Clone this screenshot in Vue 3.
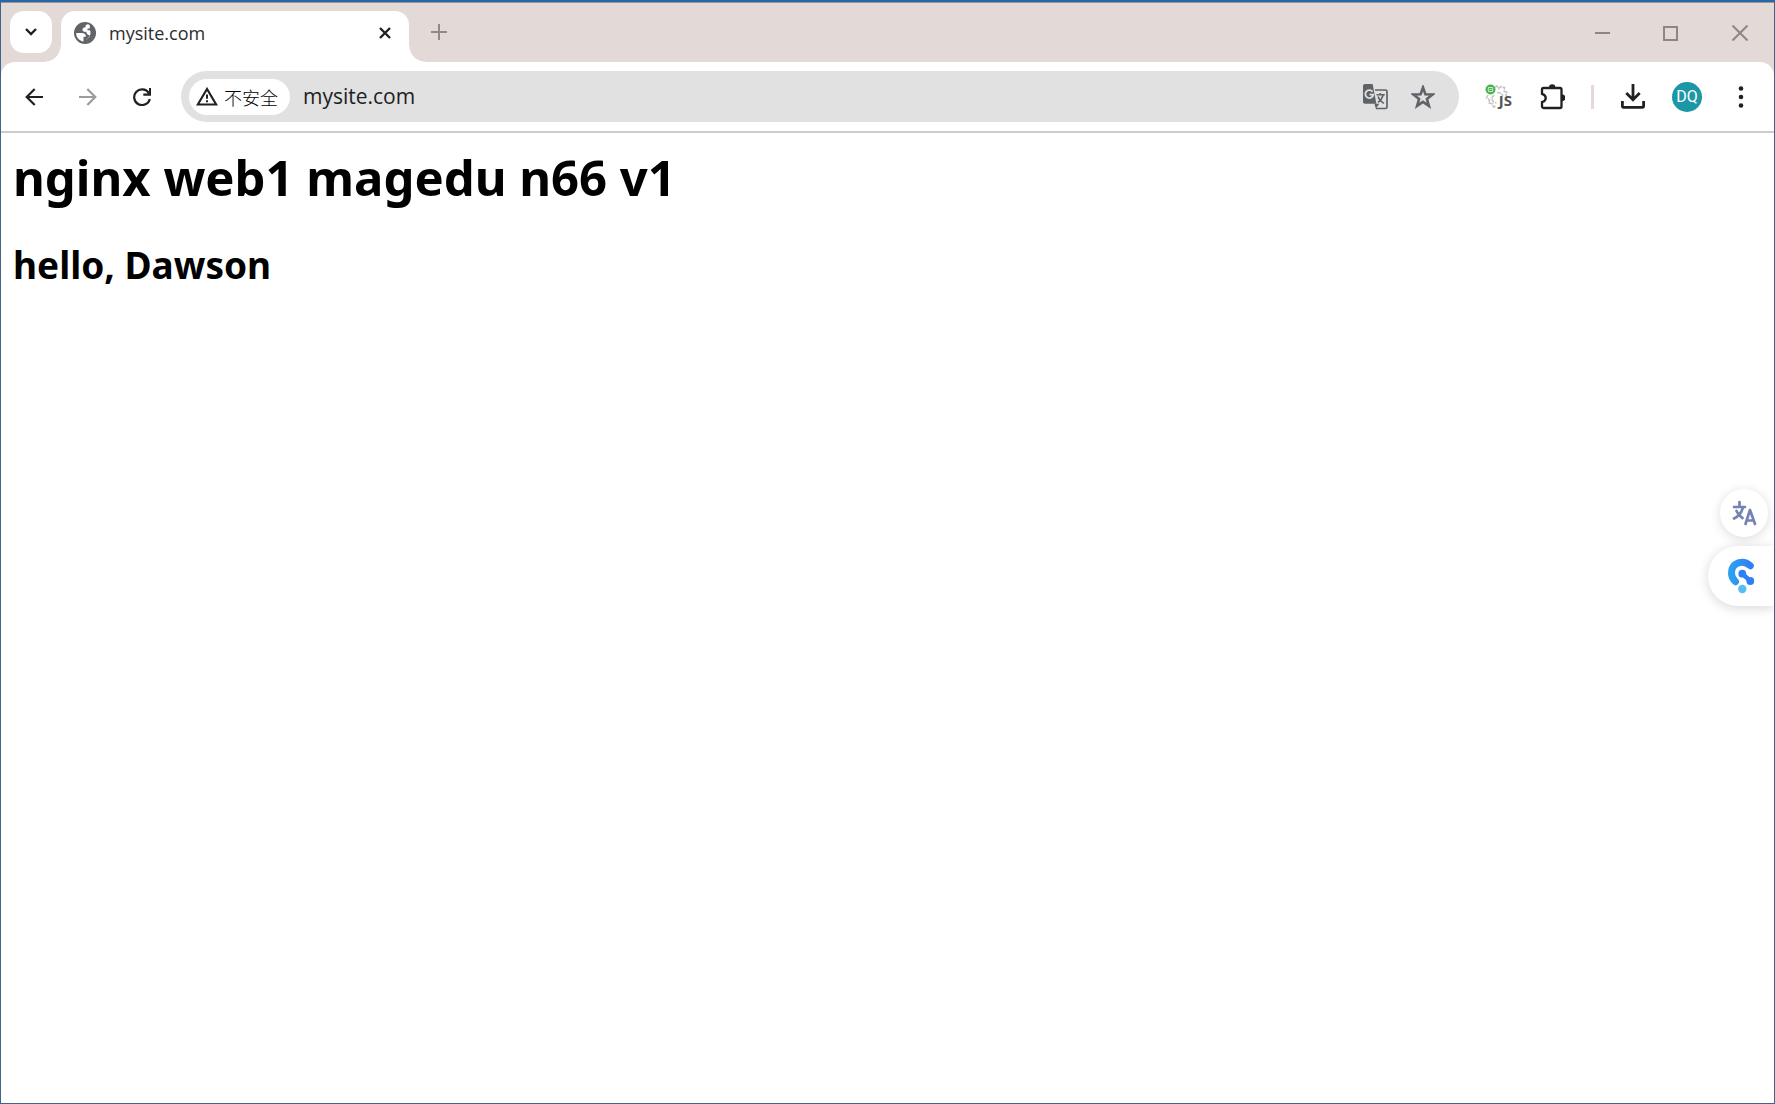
<script setup>
import { ref } from 'vue'

const address = ref('mysite.com')
</script>

<template>
  <div class="window">
    <header class="tabstrip">
      <button class="tab-search" aria-label="搜索标签页">
        <svg width="14" height="10" viewBox="0 0 14 10"><path d="M2 2l5 5 5-5" fill="none" stroke="#202124" stroke-width="2.4" /></svg>
      </button>
      <div class="tab">
        <svg class="favicon" width="22" height="22" viewBox="0 0 22 22">
          <circle cx="11" cy="11" r="11" fill="#5f6368" />
          <path d="M2.200 11h5.300c3 0 4.500 1.300 4.500 3.800H9.500v4.700C5.500 19 2.100 15.500 2.200 11z" fill="#fff" />
          <path d="M13.500 2.300c-1.700.5-2.200 1.500-2 2.900-2.200.2-3 1-3 2.500s.9 2 3 2c.6 0 1 .3 1.100 1 .3 1.700 1.300 2.300 3 2.300-.3 2-1.500 3.500-3.600 4.500v2.300c5-.5 8-4.300 7.800-8.800h-2.300c-.7 0-1-.5-1-1.200 0-1-.5-1.500-1.500-1.500h-1.500V6.500h2.300V3.200c-.7-.5-1.500-.8-2.300-.9z" fill="#fff" />
          <path d="M16.500 9.500c.4 4-1.500 7-4.500 8v2.700c5-.6 8.500-4.500 8.300-9.200h-2.500z" fill="#5f6368" />
        </svg>
        <span class="tab-title">mysite.com</span>
        <button class="tab-close" aria-label="关闭">
          <svg width="14" height="14" viewBox="0 0 14 14"><path d="M2 2l10 10M12 2L2 12" stroke="#202124" stroke-width="2.400" /></svg>
        </button>
      </div>
      <button class="new-tab" aria-label="新标签页">
        <svg width="16" height="16" viewBox="0 0 16 16"><path d="M8 0v16M0 8h16" stroke="#8f8a88" stroke-width="2" /></svg>
      </button>
      <div class="controls">
        <button aria-label="最小化"><svg width="16" height="16" viewBox="0 0 16 16"><path d="M1 8h15" stroke="#8c8684" stroke-width="2" /></svg></button>
        <button aria-label="最大化"><svg width="15" height="15" viewBox="0 0 15 15"><path d="M1 1h13v13H1z" fill="none" stroke="#8c8684" stroke-width="2" /></svg></button>
        <button aria-label="关闭窗口"><svg width="16" height="16" viewBox="0 0 16 16"><path d="M.5.5l15 15M15.500.5l-15 15" stroke="#8c8684" stroke-width="2" /></svg></button>
      </div>
    </header>

    <div class="toolbar-back">
      <nav class="toolbar">
        <button class="tool" aria-label="后退">
          <svg width="18" height="18" viewBox="0 0 18 18"><path d="M18 9H2M9.700 1L1.700 9l8 8" fill="none" stroke="#202124" stroke-width="2.200" /></svg>
        </button>
        <button class="tool" aria-label="前进">
          <svg width="18" height="18" viewBox="0 0 18 18"><path d="M0 9h16M8.300 1l8 8-8 8" fill="none" stroke="#9c9c9c" stroke-width="2.200" /></svg>
        </button>
        <button class="tool" aria-label="重新加载">
          <svg width="18" height="18" viewBox="0 0 18 18"><path d="M15.600 4.700A7.900 7.900 0 1 0 16.800 11" fill="none" stroke="#202124" stroke-width="2.200" /><path d="M18 0v7.700h-7.700V5.600h3.900l1.800-1.900V0z" fill="#202124" /></svg>
        </button>
        <div class="omnibox">
          <button class="chip">
            <svg width="22" height="19" viewBox="0 0 22 19"><path d="M11 2L1.800 17.500h18.400z" fill="none" stroke="#202124" stroke-width="2.200" /><path d="M11 7.500v4.300M11 13.300v2" stroke="#202124" stroke-width="2" /></svg>
            <span>不安全</span>
          </button>
          <input v-model="address" class="address" type="text" aria-label="地址" />
          <button class="omni-button" aria-label="翻译此页">
            <svg width="25" height="26" viewBox="0 0 25 26">
              <path d="M12 6h10.500c.8 0 1.500.6 1.500 1.500v15.500c0 .9-.7 1.500-1.500 1.500H13" fill="none" stroke="#5f6368" stroke-width="1.700" />
              <path d="M2 0h7.600l3.800 19.800H2c-1.200 0-2-.8-2-2V2C0 .8.800 0 2 0z" fill="#5f6368" />
              <path d="M11.500 19.800h4.800l-3.500 5z" fill="#5f6368" />
              <path d="M9.600 7.800A4 4 0 1 0 10.300 10.600H6.500" fill="none" stroke="#e1e1e1" stroke-width="1.800" />
              <path d="M13.500 10.700h8.300M17.300 9v1.700M20.200 10.700c-.8 3.300-2.600 5.800-5.200 7.700M15 12.500c1 2.800 3 5 6 7" fill="none" stroke="#5f6368" stroke-width="1.500" />
            </svg>
          </button>
          <button class="omni-button" aria-label="为此页添加书签">
            <svg width="24" height="24" viewBox="0 0 24 24"><path d="M12 2.500l2.400 6.700 7.200.3-5.700 4.400 2 7-5.900-4-5.900 4 2-7-5.700-4.400 7.200-.3z" fill="none" stroke="#5f6368" stroke-width="2.600" /></svg>
          </button>
        </div>
        <button class="tool ext" aria-label="JS 扩展">
          <svg width="26" height="26" viewBox="0 0 26 26">
            <path d="M10 3l2-1 1.500 2.500 3-2 3 1-.5 3.500 3 1.500-1 3 1.500 2M3 11l-1.500 3 3 2-.5 3 3.500 1 1 3 3-1M9 11l-2.500 3 2 4 3 1M12 8.500l4 .5 2 3" fill="none" stroke="#c4c4c4" stroke-width="1.600" stroke-dasharray="4 1" />
            <circle cx="5.500" cy="5.500" r="5" fill="#49b04f" />
            <path d="M3.300 3.500h4.400v4H3.300zM4.500 5.500h2" fill="none" stroke="#c9efca" stroke-width="1" />
          </svg>
          <span class="ext-label">JS</span>
        </button>
        <button class="tool" aria-label="扩展程序">
          <svg width="26" height="26" viewBox="0 0 26 26"><path d="M4.500 4h16.500c.8 0 1.500.6 1.500 1.500v17c0 .8-.7 1.500-1.500 1.500h-16.500c-.8 0-1.500-.7-1.500-1.500v-4.300c5-1.500 5-6.900 0-8.400V5.500C3 4.600 3.700 4 4.500 4z" fill="none" stroke="#202124" stroke-width="2.300" /><path d="M10 3.500a3.200 3.200 0 0 1 6.400 0zM23 10.500a3.400 3.400 0 0 1 0 6.800z" fill="#202124" /></svg>
        </button>
        <span class="divider"></span>
        <button class="tool" aria-label="下载内容">
          <svg width="24" height="25" viewBox="0 0 24 25"><path d="M12 0v15M5.300 9l6.700 6.700L18.700 9" fill="none" stroke="#202124" stroke-width="2.800" /><path d="M1.400 17v5c0 .8.500 1.300 1.300 1.300h18.600c.8 0 1.300-.5 1.300-1.300v-5" fill="none" stroke="#202124" stroke-width="2.800" /></svg>
        </button>
        <button class="tool" aria-label="个人资料"><span class="avatar">DQ</span></button>
        <button class="tool" aria-label="菜单">
          <svg width="6" height="22" viewBox="0 0 6 22" fill="#202124"><circle cx="3" cy="2.500" r="2.300" /><circle cx="3" cy="11" r="2.300" /><circle cx="3" cy="19.500" r="2.300" /></svg>
        </button>
      </nav>
    </div>

    <main class="page">
      <h1>nginx web1 magedu n66 v1</h1>
      <h2>hello, Dawson</h2>
    </main>

    <aside class="floating">
      <button class="translate" aria-label="翻译">
        <svg width="26" height="26" viewBox="0 0 26 26" fill="none" stroke="#7482b4" stroke-width="2.700" stroke-linecap="round" stroke-linejoin="round"><path d="M3 7h11M8.500 2v5M12 7c-1 5-4 9-9 11.500M5.500 11c1.300 3 3.500 5.500 6 7" /><path d="M14.500 24l4.500-14 5 14M16 20.500h6.500" /></svg>
      </button>
      <button class="assistant" aria-label="助手">
        <svg width="28" height="36" viewBox="0 0 28 36">
          <defs><linearGradient id="arc" x1="0" y1="0" x2="1" y2="0"><stop offset="0" stop-color="#2c9ff0" /><stop offset="1" stop-color="#2f80f8" /></linearGradient></defs>
          <path d="M23.300 7.800C16.500 1.500 4.500 4 4.500 15c0 4 1.500 6.500 4 8.700" fill="none" stroke="url(#arc)" stroke-width="7" stroke-linecap="round" />
          <path d="M15.300 15.700l8 7.300" stroke="#2f80f8" stroke-width="4.500" />
          <circle cx="15.300" cy="15.700" r="3.900" fill="#2f80f8" /><circle cx="23.300" cy="23" r="3.900" fill="#2f80f8" />
          <circle cx="15.300" cy="31" r="4.200" fill="#55bff3" />
        </svg>
      </button>
    </aside>
  </div>
</template>

<style>
body {
  margin: 0;
}
</style>

<style scoped>
.window {
  box-sizing: border-box;
  position: relative;
  display: flex;
  flex-direction: column;
  min-height: 100vh;
  border: 1px solid #41648a;
  border-top: 2px solid #2766a8;
  background: #fff;
  font-family: "Noto Sans", "Noto Sans CJK SC", sans-serif;
}
button {
  display: flex;
  align-items: center;
  justify-content: center;
  flex: none;
  padding: 0;
  border: 0;
  background: none;
  color: inherit;
  font: inherit;
}
svg {
  display: block;
  flex: none;
}
.tabstrip {
  display: flex;
  height: 59px;
  padding-left: 9px;
  border-top: 1px solid #9d9591;
  background: #e3dad7;
}
.tab-search {
  width: 42px;
  height: 42px;
  margin-top: 8px;
  border-radius: 14px;
  background: #fff;
}
.tab {
  position: relative;
  box-sizing: border-box;
  display: flex;
  align-items: center;
  width: 348px;
  height: 51px;
  margin: 8px 0 0 9px;
  padding: 0 17px 8px 13px;
  border-radius: 14px 14px 0 0;
  background: #fff;
}
.tab::before,
.tab::after {
  content: "";
  position: absolute;
  bottom: 0;
  width: 16px;
  height: 16px;
}
.tab::before {
  right: 100%;
  background: radial-gradient(circle at 0 0, transparent 15px, #fff 16px);
}
.tab::after {
  left: 100%;
  background: radial-gradient(circle at 100% 0, transparent 15px, #fff 16px);
}
.tab-title {
  flex: 1;
  margin-left: 13px;
  color: #2c2d30;
  font-family: "Open Sans", sans-serif;
  font-size: 18px;
  line-height: 24px;
}
.new-tab {
  width: 36px;
  height: 36px;
  margin: 11px 0 0 12px;
}
.controls {
  display: flex;
  height: 60px;
  margin-left: auto;
}
.controls button {
  width: 69px;
}
.toolbar-back {
  background: #e3dad7;
}
.toolbar {
  display: flex;
  align-items: center;
  height: 69px;
  padding: 0 6px;
  border-radius: 14px 14px 0 0;
  background: #fff;
}
.tool {
  position: relative;
  width: 54px;
  height: 54px;
}
.omnibox {
  display: flex;
  flex: 1;
  align-items: center;
  height: 51px;
  margin: 0 12px;
  border-radius: 26px;
  background: #e1e1e1;
}
.chip {
  justify-content: flex-start;
  gap: 6px;
  width: 101px;
  height: 36px;
  margin-left: 8px;
  padding-left: 7px;
  box-sizing: border-box;
  border-radius: 18px;
  background: #fff;
  color: #000;
  font-family: "Noto Sans CJK SC", sans-serif;
  font-size: 18px;
  font-weight: 300;
}
.address {
  flex: 1;
  min-width: 0;
  padding: 0 0 2px;
  margin-left: 13px;
  border: 0;
  outline: 0;
  background: none;
  color: #202124;
  font-family: "Open Sans", sans-serif;
  font-size: 21px;
}
.omni-button {
  width: 48px;
  height: 48px;
}
.omni-button:last-child {
  margin-right: 12px;
}
.ext-label {
  position: absolute;
  right: 13px;
  bottom: 15px;
  color: #555;
  font-family: "Open Sans", sans-serif;
  font-size: 15px;
  font-weight: 700;
  line-height: 18px;
}
.divider {
  width: 3px;
  height: 24px;
  margin: 0 12px;
  background: #e3dad7;
}
.avatar {
  width: 30px;
  border-radius: 50%;
  background: #1b97a6;
  color: #fff;
  font-family: Roboto, sans-serif;
  font-size: 16px;
  line-height: 30px;
  text-align: center;
}
.page {
  flex: 1;
  padding: 11px 12px;
  border-top: 2px solid #ccc;
  color: #000;
}
h1,
h2 {
  margin: 0;
  font-weight: 700;
}
h1 {
  font-size: 49px;
  line-height: 66px;
}
h2 {
  margin-top: 31px;
  font-size: 37px;
  line-height: 48px;
}
.floating {
  position: absolute;
  top: 487px;
  right: 0;
  display: flex;
  flex-direction: column;
  align-items: flex-end;
  gap: 9px;
}
.translate {
  width: 48px;
  height: 48px;
  margin-right: 6px;
  border-radius: 50%;
  background: #fff;
  box-shadow: 0 2px 12px rgba(0, 0, 0, 0.14);
}
.assistant {
  width: 66px;
  height: 60px;
  border-radius: 30px 0 0 30px;
  background: #fff;
  box-shadow: 0 2px 12px rgba(0, 0, 0, 0.16);
}
</style>
